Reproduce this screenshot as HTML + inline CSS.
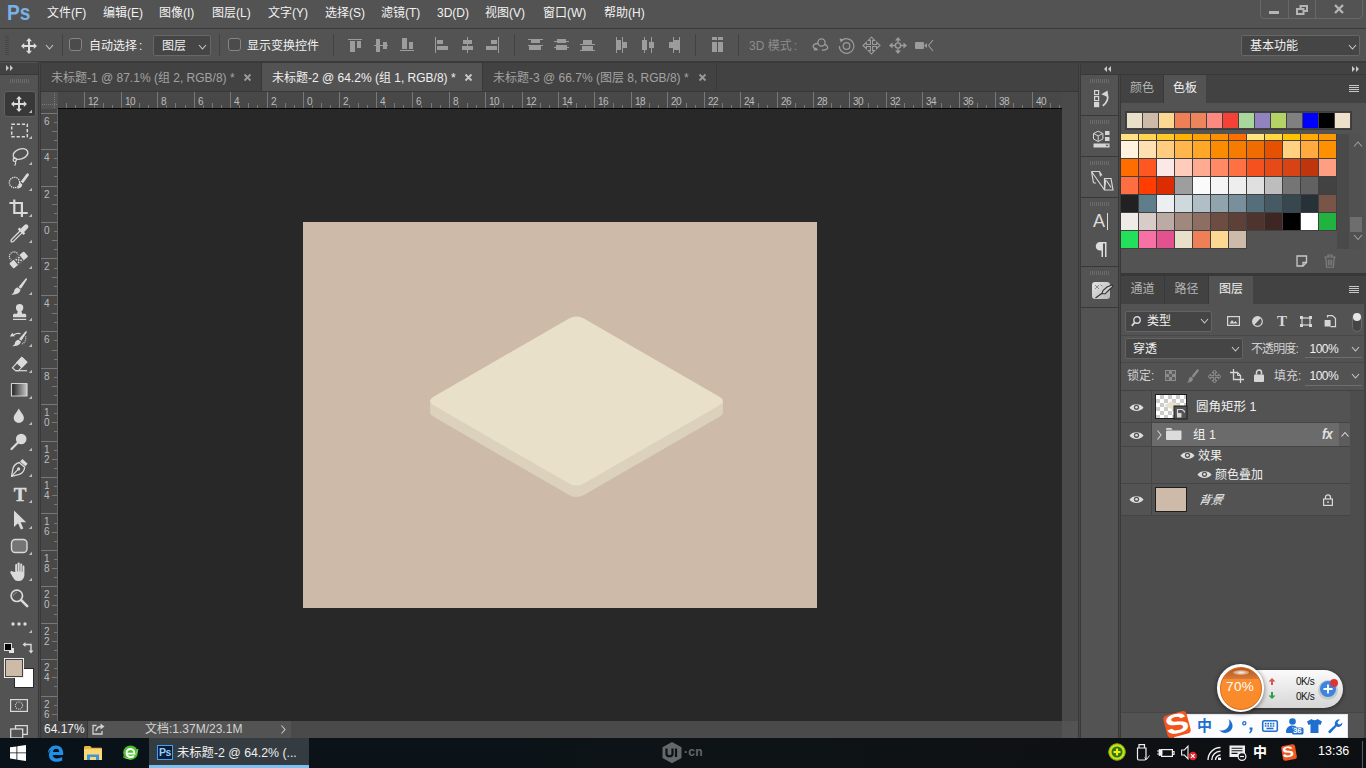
<!DOCTYPE html>
<html lang="zh-CN">
<head>
<meta charset="utf-8">
<title>Photoshop</title>
<style>
*{box-sizing:border-box;margin:0;padding:0}
html,body{width:1366px;height:768px;overflow:hidden;background:#535353}
body{position:relative;font-family:"Liberation Sans","Noto Sans CJK SC",sans-serif;font-size:12px;color:#dcdcdc}
.a{position:absolute}
svg{position:absolute;overflow:visible}
.t{position:absolute;white-space:nowrap;line-height:16px;font-size:12px}
#menubar{left:0;top:0;width:1366px;height:28px;background:#535353}
#menubar .ps{position:absolute;left:7px;top:-0.5px;font-size:21.5px;font-weight:bold;color:#7ab1e6;letter-spacing:0;line-height:26px;transform-origin:0 0;transform:scaleX(0.89)}
#menubar .mi{position:absolute;top:5px;line-height:16px;font-size:12px;color:#f2f2f2;white-space:nowrap}
#optbar{left:0;top:28px;width:1366px;height:35px;background:#535353;border-top:1px solid #3a3a3a;border-bottom:2px solid #3a3a3a}
.sep{position:absolute;width:1px;background:#424242;top:34px;height:22px}
.cb{position:absolute;width:13px;height:13px;border:1px solid #858585;border-radius:3px;background:#4b4b4b;top:38px}
.dd{position:absolute;background:#454545;border:1px solid #666;border-radius:2px}
#tools{left:0;top:62px;width:39px;height:676px;background:#535353;border-right:1px solid #3d3d3d}
#toolhdr{left:0;top:63px;width:39px;height:12px;background:#424242;border-right:1px solid #383838;border-bottom:1px solid #383838}
#tgap{left:38px;top:63px;width:3px;height:675px;background:linear-gradient(90deg,#393939 0,#393939 33.3%,#474747 33.3%,#474747 66.6%,#393939 66.6%)}
#tabbar{left:41px;top:63px;width:1037px;height:29px;background:#424242;border-bottom:1px solid #383838}
.dtab{position:absolute;top:0;height:28px;border-right:1px solid #383838;color:#a2a2a2;font-size:12px;line-height:30px;white-space:nowrap}
.dtab.on{background:#535353;color:#f0f0f0}
.dtab span{position:absolute;top:0}
#canvas{left:41px;top:92px;width:1021px;height:629px;background:#282828}
#hruler{left:41px;top:92px;width:1021px;height:17px;background:#484848;overflow:hidden;border-bottom:1px solid #060606}
#vruler{left:41px;top:109px;width:17px;height:612px;background:#484848;overflow:hidden;border-right:1px solid #666}
#rcorner{left:41px;top:92px;width:17px;height:17px;background:#535353}
.rl{position:absolute;font-size:10px;line-height:10px;color:#bcbcbc;letter-spacing:-0.6px}
#vscroll{left:1062px;top:92px;width:16px;height:629px;background:#4a4a4a}
#statusbar{left:41px;top:721px;width:1021px;height:17px;background:#4a4a4a}
#doc{left:303px;top:222px;width:514px;height:386px;background:#cdbaa9}
#rsplit{left:1078px;top:63px;width:3px;height:675px;background:linear-gradient(90deg,#393939 0,#393939 33.3%,#474747 33.3%,#474747 66.6%,#393939 66.6%)}
#rhdr{left:1081px;top:63px;width:285px;height:12px;background:#424242;border-bottom:1px solid #383838}
#istrip{left:1081px;top:75px;width:37px;height:663px;background:#535353}
#isgap{left:1118px;top:75px;width:3px;height:663px;background:linear-gradient(90deg,#393939 0,#393939 33.3%,#474747 33.3%,#474747 66.6%,#393939 66.6%)}
.ig{position:absolute;left:0;width:37px;background:#535353;border-bottom:1.5px solid #383838}
.grip{position:absolute;height:4px;background:repeating-linear-gradient(90deg,#6a6a6a 0,#6a6a6a 1px,transparent 1px,transparent 2px)}
#rpanels{left:1121px;top:75px;width:245px;height:663px;background:#535353}
.ptabs{position:absolute;left:0;width:245px;height:28px;background:#424242;border-bottom:1px solid #424242}
.ptab{position:absolute;top:0;height:28px;line-height:27px;text-align:center;color:#b4b4b4;font-size:12px;border-right:1px solid #383838}
.ptab.on{background:#535353;color:#f0f0f0;border-right:none}
.sw{position:absolute;width:17px;height:17px}
.rsw{position:absolute;width:15px;height:15px;top:1px}
#taskbar{left:0;top:738px;width:1366px;height:30px;background:linear-gradient(90deg,#0a1219 0,#0b1319 30%,#0e1315 55%,#0d1012 100%)}
</style>
</head>
<body>
<div id="menubar" class="a"><div class="ps">Ps</div>
<div class="mi" style="left:47px">文件(F)</div>
<div class="mi" style="left:103px">编辑(E)</div>
<div class="mi" style="left:159px">图像(I)</div>
<div class="mi" style="left:212px">图层(L)</div>
<div class="mi" style="left:268px">文字(Y)</div>
<div class="mi" style="left:325px">选择(S)</div>
<div class="mi" style="left:381px">滤镜(T)</div>
<div class="mi" style="left:437px">3D(D)</div>
<div class="mi" style="left:485px">视图(V)</div>
<div class="mi" style="left:543px">窗口(W)</div>
<div class="mi" style="left:604px">帮助(H)</div>
<div class="a" style="left:1260px;top:-2px;width:103px;height:21px;border:1px solid #686868;border-radius:0 0 4px 4px"></div>
<div class="a" style="left:1288px;top:0;width:1px;height:18px;background:#686868"></div><div class="a" style="left:1315px;top:0;width:1px;height:18px;background:#686868"></div>
<div class="a" style="left:1269px;top:11px;width:10px;height:3px;background:#b4b4b4"></div>
<svg style="left:1296px;top:5px" width="12" height="10"><path d="M4.5 3V1h6.5v5h-2.5M1 4h6.5v5H1z" fill="none" stroke="#b4b4b4" stroke-width="2"/></svg>
<svg style="left:1334px;top:5px" width="10" height="8"><path d="M1 0l8 8M9 0L1 8" fill="none" stroke="#b4b4b4" stroke-width="2.4"/></svg>
</div>
<div id="optbar" class="a"></div>
<div class="a" style="left:5px;top:36px;width:4px;height:19px;background:repeating-linear-gradient(0deg,#474747 0,#474747 1px,transparent 1px,transparent 2px)"></div>
<svg style="left:21px;top:38px" width="16" height="16" viewBox="0 0 16 16"><path d="M8 0l3 3.2H9v3.8h3.8V5L16 8l-3.2 3V9H9v3.8h2L8 16l-3-3.2h2V9H3.2v2L0 8l3.2-3v2H7V3.2H5z" fill="#dcdcdc"/></svg>
<svg style="left:46px;top:45px" width="7" height="4"><path d="M0 0l3.5 4L7 0" fill="none" stroke="#c8c8c8" stroke-width="1.1"/></svg>
<div class="sep" style="left:62px"></div>
<div class="sep" style="left:219px"></div>
<div class="sep" style="left:333px"></div>
<div class="sep" style="left:514px"></div>
<div class="sep" style="left:695px"></div>
<div class="sep" style="left:738px"></div>
<div class="cb" style="left:69px"></div>
<div class="t" style="left:89px;top:38px;color:#f0f0f0">自动选择<span style="margin-left:2px">:</span></div>
<div class="dd" style="left:153px;top:35px;width:58px;height:21px"></div>
<div class="t" style="left:162px;top:38px;color:#f0f0f0">图层</div>
<svg style="left:199px;top:45px" width="7" height="4"><path d="M0 0l3.5 4L7 0" fill="none" stroke="#c8c8c8" stroke-width="1.1"/></svg>
<div class="cb" style="left:228px"></div>
<div class="t" style="left:247px;top:38px;color:#f0f0f0">显示变换控件</div>
<svg style="left:0;top:0" width="1366" height="62" fill="#9c9c9c">
<rect x="348" y="39" width="14" height="1"/><rect x="350" y="41" width="5" height="11"/><rect x="357" y="41" width="4" height="7"/>
<rect x="374" y="45" width="14" height="1"/><rect x="376" y="39" width="4" height="13"/><rect x="383" y="42" width="4" height="7"/>
<rect x="400" y="50" width="14" height="1"/><rect x="402" y="38" width="5" height="11"/><rect x="409" y="42" width="4" height="7"/>
<rect x="435" y="37" width="1" height="16"/><rect x="437" y="40" width="6" height="4"/><rect x="437" y="46" width="11" height="4"/>
<rect x="467" y="37" width="1" height="16"/><rect x="463" y="40" width="9" height="4"/><rect x="462" y="46" width="11" height="4"/>
<rect x="498" y="37" width="1" height="16"/><rect x="491" y="40" width="6" height="4"/><rect x="486" y="46" width="11" height="4"/>
<rect x="528" y="39" width="15" height="1"/><rect x="531" y="40" width="9" height="3"/><rect x="528" y="45" width="15" height="1"/><rect x="529" y="46" width="12" height="4"/>
<rect x="554" y="41" width="15" height="1"/><rect x="557" y="39" width="9" height="4"/><rect x="554" y="47" width="15" height="1"/><rect x="556" y="45" width="11" height="5"/>
<rect x="580" y="44" width="15" height="1"/><rect x="583" y="40" width="9" height="4"/><rect x="580" y="50" width="15" height="1"/><rect x="582" y="46" width="11" height="4"/>
<rect x="616" y="37" width="1" height="16"/><rect x="617" y="40" width="4" height="10"/><rect x="622" y="37" width="1" height="16"/><rect x="623" y="42" width="4" height="6"/>
<rect x="644" y="37" width="1" height="16"/><rect x="642" y="40" width="5" height="10"/><rect x="651" y="37" width="1" height="16"/><rect x="649" y="42" width="5" height="6"/>
<rect x="679" y="37" width="1" height="16"/><rect x="674" y="40" width="5" height="10"/><rect x="673" y="37" width="1" height="16"/><rect x="669" y="42" width="4" height="6"/>
<rect x="712" y="37" width="5" height="3"/><rect x="718" y="37" width="5" height="3"/><rect x="712" y="42" width="5" height="10"/><rect x="718" y="42" width="5" height="10"/>
</svg>
<div class="t" style="left:749px;top:38px;color:#8c8c8c">3D 模式<span style="margin-left:2px">:</span></div>
<svg style="left:811px;top:37px" width="18" height="18" viewBox="0 0 18 18" fill="none" stroke="#9c9c9c" stroke-width="1.3"><circle cx="10.5" cy="5.5" r="3.6"/><path d="M7 6.5C3.5 6.5 1 8.5 2.5 10.5l2.5 2.2M11 13c4 .5 6.500-1.500 5.500-3.500-.7-1.200-2-1.800-3.200-2"/><path d="M2.500 13.500l5-.3-2.800-3z" fill="#9c9c9c" stroke="none"/></svg>
<svg style="left:838px;top:37px" width="17" height="17" viewBox="0 0 17 17" fill="none" stroke="#9c9c9c" stroke-width="1.2"><circle cx="8.500" cy="9" r="3.300"/><path d="M3.500 3.800A7.300 7.300 0 1 1 1.300 9"/><path d="M1.500 1.200l4.200 1.300-3 3z" fill="#9c9c9c" stroke="none"/></svg>
<svg style="left:863px;top:37px" width="17" height="17" viewBox="0 0 16 16"><path d="M8 0l3 3.2H9v3.8h3.8V5L16 8l-3.2 3V9H9v3.8h2L8 16l-3-3.2h2V9H3.2v2L0 8l3.2-3v2H7V3.2H5z" fill="none" stroke="#9c9c9c" stroke-width="1"/></svg>
<svg style="left:889px;top:37px" width="18" height="17" viewBox="0 0 18 17" fill="#9c9c9c"><path d="M9 0l3 3.500H6zM9 17l3-3.500H6zM0 8.500l3.500-3v6zM18 8.500l-3.500-3v6z"/><circle cx="9" cy="8.500" r="2.600" fill="none" stroke="#9c9c9c" stroke-width="1.400"/><path d="M9 3v2.500M9 11.500V14M3 8.500h3M12 8.500h3" stroke="#9c9c9c" stroke-width="1.400"/></svg>
<svg style="left:915px;top:39px" width="19" height="13" viewBox="0 0 19 13"><rect x="0" y="3" width="9" height="7" rx="1" fill="#9c9c9c"/><path d="M9 6.500l3-2.500v5z" fill="#9c9c9c"/><path d="M18 1l-4.500 5.500L18 12" fill="none" stroke="#9c9c9c" stroke-width="1.100"/></svg>
<div class="dd" style="left:1241px;top:35px;width:119px;height:21px"></div>
<div class="t" style="left:1250px;top:38px;color:#f0f0f0">基本功能</div>
<svg style="left:1349px;top:45px" width="7" height="4"><path d="M0 0l3.5 4L7 0" fill="none" stroke="#c8c8c8" stroke-width="1.1"/></svg>
<div id="tools" class="a"></div><div id="toolhdr" class="a"></div><div id="tgap" class="a"></div>
<svg style="left:6px;top:65px" width="8" height="6" fill="#c8c8c8"><path d="M0 0l3 3-3 3zM4 0l3 3-3 3z"/></svg>
<div class="grip" style="left:10px;top:79px;width:20px"></div>
<div class="a" style="left:4px;top:91px;width:32px;height:26px;background:#383838;border:1px solid #606060;border-radius:3px"></div>
<svg style="left:6px;top:91px" width="26" height="26" viewBox="0 0 26 26" fill="none" stroke="#dadada" stroke-width="1.4" stroke-linecap="round" stroke-linejoin="round"><path transform="translate(5,5)" d="M8 0l3 3.2H9v3.8h3.8V5L16 8l-3.2 3V9H9v3.8h2L8 16l-3-3.2h2V9H3.2v2L0 8l3.2-3v2H7V3.2H5z" fill="#dadada" stroke="none"/><path d="M26 18.800v3.200h-3.200z" fill="#bdbdbd" stroke="none"/></svg>
<svg style="left:6px;top:117px" width="26" height="26" viewBox="0 0 26 26" fill="none" stroke="#dadada" stroke-width="1.4" stroke-linecap="round" stroke-linejoin="round"><rect x="5.700" y="7.200" width="15.600" height="12.600" stroke-dasharray="3.200 1.900" stroke-linecap="butt" stroke-width="1.500"/><path d="M26 18.800v3.200h-3.200z" fill="#bdbdbd" stroke="none"/></svg>
<svg style="left:6px;top:143px" width="26" height="26" viewBox="0 0 26 26" fill="none" stroke="#dadada" stroke-width="1.4" stroke-linecap="round" stroke-linejoin="round"><ellipse cx="14.500" cy="11" rx="7.600" ry="5" transform="rotate(-20 14.500 11)"/><circle cx="8.800" cy="16.800" r="1.700" stroke-width="1.200"/><path d="M9.200 18.500c.8 1 .6 2.500-.2 3.700" stroke-width="1.200"/><path d="M26 18.800v3.200h-3.200z" fill="#bdbdbd" stroke="none"/></svg>
<svg style="left:6px;top:169px" width="26" height="26" viewBox="0 0 26 26" fill="none" stroke="#dadada" stroke-width="1.4" stroke-linecap="round" stroke-linejoin="round"><circle cx="8.500" cy="13.500" r="5.200" stroke-dasharray="0.100 2.100" stroke-width="1.500"/><path d="M22.300 4.500c.8.600.7 1.500.2 2.200l-5.500 7.600-2.200-1.700 5.600-7.500c.5-.7 1.300-1 1.900-.6z" fill="#dadada" stroke="none"/><path d="M14 13.600l2.300 1.800c-.2 2.500-2.300 4.300-5.800 4.100 1.700-1 1.700-2.200 2-3.800.2-.9.800-1.700 1.500-2.100z" fill="#dadada" stroke="none"/><path d="M26 18.800v3.200h-3.200z" fill="#bdbdbd" stroke="none"/></svg>
<svg style="left:6px;top:195px" width="26" height="26" viewBox="0 0 26 26" fill="none" stroke="#dadada" stroke-width="1.4" stroke-linecap="round" stroke-linejoin="round"><path d="M8.300 4.500V18h13.400M3.400 8h12.500v14" stroke-width="2.200" stroke-linecap="butt" stroke-linejoin="miter"/><path d="M26 18.800v3.200h-3.200z" fill="#bdbdbd" stroke="none"/></svg>
<svg style="left:6px;top:221px" width="26" height="26" viewBox="0 0 26 26" fill="none" stroke="#dadada" stroke-width="1.4" stroke-linecap="round" stroke-linejoin="round"><path d="M14 10l-8.200 8.200c-.7.700-.9 1.800-.600 2.500.800.300 1.800.100 2.500-.600L15.900 11.900" stroke-width="1.300"/><path d="M12.600 7.400l5.800 5.800" stroke-width="2.500" stroke-linecap="butt"/><path d="M16.800 9l3.300-3.300" stroke-width="4.600"/><path d="M26 18.800v3.200h-3.200z" fill="#bdbdbd" stroke="none"/></svg>
<svg style="left:6px;top:247px" width="26" height="26" viewBox="0 0 26 26" fill="none" stroke="#dadada" stroke-width="1.4" stroke-linecap="round" stroke-linejoin="round"><circle cx="8" cy="9.500" r="4.600" stroke-dasharray="0.100 1.900" stroke-width="1.300"/><g transform="rotate(-40 12.700 13)"><rect x="2.500" y="9" width="20.400" height="8" rx="1.800" fill="#dadada" stroke="#535353" stroke-width="1.200"/><rect x="9" y="9.600" width="7.400" height="6.800" fill="#535353" stroke="none"/><g fill="#dadada" stroke="none"><circle cx="11" cy="11.300" r="0.900"/><circle cx="14.400" cy="11.300" r="0.900"/><circle cx="11" cy="14.700" r="0.900"/><circle cx="14.400" cy="14.700" r="0.900"/><circle cx="12.700" cy="13" r="0.900"/></g></g><path d="M26 18.800v3.200h-3.200z" fill="#bdbdbd" stroke="none"/></svg>
<svg style="left:6px;top:273px" width="26" height="26" viewBox="0 0 26 26" fill="none" stroke="#dadada" stroke-width="1.4" stroke-linecap="round" stroke-linejoin="round"><path d="M20.700 5.400c.500.300.400.900.100 1.400L15 15.800l-2.500-1.900 7-8.200c.400-.400.800-.600 1.200-.300z" fill="#dadada" stroke="none"/><path d="M11.800 14.500l2.700 2.100c-.2 3.200-3.800 5.400-9.300 5 2.300-1.200 2.700-2.400 3.100-4.200.400-1.500 1.900-2.700 3.500-2.900z" fill="#dadada" stroke="none"/><path d="M26 18.800v3.200h-3.200z" fill="#bdbdbd" stroke="none"/></svg>
<svg style="left:6px;top:299px" width="26" height="26" viewBox="0 0 26 26" fill="none" stroke="#dadada" stroke-width="1.4" stroke-linecap="round" stroke-linejoin="round"><circle cx="13.600" cy="8.700" r="3.700" fill="#dadada" stroke="none"/><path d="M12 11.500h3.200l1 3.500h-5.200z" fill="#dadada" stroke="none"/><path d="M7 18.300v-2c0-.8.600-1.500 1.500-1.500h10.200c.8 0 1.500.700 1.500 1.500v2z" fill="#dadada" stroke="none"/><path d="M7 20.400h13.200" stroke-width="1.200" stroke-linecap="butt"/><path d="M26 18.800v3.200h-3.200z" fill="#bdbdbd" stroke="none"/></svg>
<svg style="left:6px;top:325px" width="26" height="26" viewBox="0 0 26 26" fill="none" stroke="#dadada" stroke-width="1.4" stroke-linecap="round" stroke-linejoin="round"><g transform="translate(1.500,1.300) scale(0.920)"><path d="M20.700 5.400c.500.300.400.900.100 1.400L15 15.800l-2.500-1.900 7-8.200c.400-.400.800-.600 1.200-.300z" fill="#dadada" stroke="none"/><path d="M11.800 14.500l2.700 2.100c-.2 3.200-3.800 5.400-9.300 5 2.300-1.200 2.700-2.400 3.100-4.200.400-1.500 1.900-2.700 3.500-2.900z" fill="#dadada" stroke="none"/></g><path d="M8 9.800c1.600-1.300 3.800-1.700 6-1.100" stroke-width="1.200"/><path d="M3.800 11.500l5-.2-2.400-3.500z" fill="#dadada" stroke="none"/><path d="M19.800 11.800a7 7 0 0 1-3.300 7" stroke-dasharray="0.100 1.900" stroke-width="1.200"/><path d="M26 18.800v3.200h-3.200z" fill="#bdbdbd" stroke="none"/></svg>
<svg style="left:6px;top:351px" width="26" height="26" viewBox="0 0 26 26" fill="none" stroke="#dadada" stroke-width="1.4" stroke-linecap="round" stroke-linejoin="round"><path d="M15.800 6.500l5 4.600-8.300 8.500h-3l-3.100-2.800z" stroke-width="1.200"/><path d="M15.800 6.500l5 4.600-5 5.100-5-4.600z" fill="#dadada" stroke="#dadada" stroke-width="1.200"/><path d="M9.500 19.700H21" stroke-width="1.200" stroke-linecap="butt"/><path d="M26 18.800v3.200h-3.200z" fill="#bdbdbd" stroke="none"/></svg>
<svg style="left:6px;top:377px" width="26" height="26" viewBox="0 0 26 26" fill="none" stroke="#dadada" stroke-width="1.4" stroke-linecap="round" stroke-linejoin="round"><defs><linearGradient id="gr" x1="0" y1="0" x2="1" y2="0"><stop offset="0" stop-color="#1e1e1e"/><stop offset="1" stop-color="#c8c8c8"/></linearGradient></defs><rect x="5.500" y="6.500" width="15.500" height="12.500" fill="url(#gr)" stroke="#d2d2d2" stroke-width="1.200"/><path d="M26 18.800v3.200h-3.200z" fill="#bdbdbd" stroke="none"/></svg>
<svg style="left:6px;top:403px" width="26" height="26" viewBox="0 0 26 26" fill="none" stroke="#dadada" stroke-width="1.4" stroke-linecap="round" stroke-linejoin="round"><path d="M12.800 5.600C11.500 8.500 7.700 12 7.700 15a5.100 5.100 0 0 0 10.200 0C17.900 12 14.100 8.500 12.800 5.600z" fill="#dadada" stroke="none"/><path d="M26 18.800v3.200h-3.200z" fill="#bdbdbd" stroke="none"/></svg>
<svg style="left:6px;top:429px" width="26" height="26" viewBox="0 0 26 26" fill="none" stroke="#dadada" stroke-width="1.4" stroke-linecap="round" stroke-linejoin="round"><circle cx="15.200" cy="10" r="5.300" fill="#dadada" stroke="none"/><path d="M11.500 14l-6 6" stroke-width="2.200"/><path d="M26 18.800v3.200h-3.200z" fill="#bdbdbd" stroke="none"/></svg>
<svg style="left:6px;top:455px" width="26" height="26" viewBox="0 0 26 26" fill="none" stroke="#dadada" stroke-width="1.4" stroke-linecap="round" stroke-linejoin="round"><path d="M16.500 4l5.200 4.800-2.300 2.500-5.400-4.700z" fill="#dadada" stroke="none"/><path d="M13.200 7.500l5.500 4.800c-.5 3.500-2.500 6-5.500 7l-7.700 2 1.500-8c1-3 3.200-5 6.200-5.800z" stroke-width="1.300"/><path d="M5.800 21l6-6.300" stroke-width="1.100"/><circle cx="12.600" cy="13.900" r="1.600" fill="#dadada" stroke="none"/><path d="M26 18.800v3.200h-3.200z" fill="#bdbdbd" stroke="none"/></svg>
<svg style="left:6px;top:481px" width="26" height="26" viewBox="0 0 26 26" fill="none" stroke="#dadada" stroke-width="1.4" stroke-linecap="round" stroke-linejoin="round"><text x="14" y="19.500" text-anchor="middle" font-family="Liberation Serif,serif" font-weight="bold" font-size="19" fill="#dadada" stroke="#dadada" stroke-width="0.500">T</text><path d="M26 18.800v3.200h-3.200z" fill="#bdbdbd" stroke="none"/></svg>
<svg style="left:6px;top:507px" width="26" height="26" viewBox="0 0 26 26" fill="none" stroke="#dadada" stroke-width="1.4" stroke-linecap="round" stroke-linejoin="round"><path d="M8 3.500v16.500l4-3.800 2.800 6.300 2.600-1.100-2.800-6.200h5.600z" fill="#dadada" stroke="none"/><path d="M26 18.800v3.200h-3.200z" fill="#bdbdbd" stroke="none"/></svg>
<svg style="left:6px;top:533px" width="26" height="26" viewBox="0 0 26 26" fill="none" stroke="#dadada" stroke-width="1.4" stroke-linecap="round" stroke-linejoin="round"><rect x="5.500" y="6.500" width="15.500" height="13" rx="3.800" fill="#757575" stroke-width="1.400"/><path d="M26 18.800v3.200h-3.200z" fill="#bdbdbd" stroke="none"/></svg>
<svg style="left:6px;top:559px" width="26" height="26" viewBox="0 0 26 26" fill="none" stroke="#dadada" stroke-width="1.4" stroke-linecap="round" stroke-linejoin="round"><path d="M9.200 13V6.200c0-1.700 2.300-1.700 2.300 0V4.700c0-1.700 2.400-1.700 2.400 0v1c0-1.600 2.300-1.600 2.300 0v1.800c0-1.500 2.200-1.500 2.200 0v8c0 3.500-2 6.500-5 6.500h-1.500c-2.300 0-3.500-1.300-4.700-3.300L4.500 14c-.9-1.500 1-2.700 2.100-1.400z" fill="#dadada" stroke="none"/><path d="M11.500 6v6M13.900 5v7M16.200 7v5.500" stroke="#535353" stroke-width="0.600"/><path d="M26 18.800v3.200h-3.200z" fill="#bdbdbd" stroke="none"/></svg>
<svg style="left:6px;top:585px" width="26" height="26" viewBox="0 0 26 26" fill="none" stroke="#dadada" stroke-width="1.4" stroke-linecap="round" stroke-linejoin="round"><circle cx="10.800" cy="10.800" r="5.700" stroke-width="1.700"/><path d="M15.200 15.200l6 6" stroke-width="2.600"/><path d="M7.500 10.500a3.400 3.400 0 0 1 3-3" stroke-width="0.900" stroke="#9a9a9a"/></svg>
<svg style="left:6px;top:611px" width="26" height="26" viewBox="0 0 26 26" fill="none" stroke="#dadada" stroke-width="1.4" stroke-linecap="round" stroke-linejoin="round"><circle cx="7" cy="13" r="1.700" fill="#dadada" stroke="none"/><circle cx="13" cy="13" r="1.700" fill="#dadada" stroke="none"/><circle cx="19" cy="13" r="1.700" fill="#dadada" stroke="none"/><path d="M26 18.800v3.200h-3.200z" fill="#bdbdbd" stroke="none"/></svg>
<div class="a" style="left:8px;top:647px;width:7px;height:7px;background:#e6e6e6;border:1px solid #535353"></div><div class="a" style="left:4px;top:643px;width:8px;height:8px;background:#000;border:1px solid #d8d8d8"></div>
<svg style="left:22px;top:642px" width="12" height="12" fill="none" stroke="#dadada" stroke-width="1.400"><path d="M3 2.500h6v6.500"/><path d="M3.500 0L0.500 2.500l3 2.500z" fill="#dadada" stroke="none"/><path d="M6.500 8.500L9 11.500l2.500-3z" fill="#dadada" stroke="none"/></svg>
<div class="a" style="left:14px;top:668px;width:20px;height:20px;background:#fff;border:1px solid #2a2a2a;box-shadow:inset 0 0 0 1px #fff"></div>
<div class="a" style="left:4px;top:658px;width:20px;height:20px;background:#cdbaa9;border:1px solid #ececec;box-shadow:inset 0 0 0 1px #444"></div>
<svg style="left:10px;top:699px" width="18" height="13" fill="none" stroke="#dadada"><rect x="0.600" y="0.600" width="16.800" height="11.800" stroke-width="1.200"/><circle cx="9" cy="6.500" r="3.600" stroke-dasharray="0.900 1" stroke-width="1.100"/></svg>
<svg style="left:10px;top:725px" width="18" height="13" fill="none" stroke="#dadada" stroke-width="1.300"><path d="M5.500 4V0.700h11.800v8.600H13"/><rect x="0.700" y="4" width="12" height="9" fill="#535353"/></svg>
<div id="tabbar" class="a">
<div class="dtab" style="left:0;width:221px"><span style="left:10px">未标题-1 @ 87.1% (组 2, RGB/8) *</span></div>
<div class="dtab on" style="left:221px;width:221px"><span style="left:231px;left:10px">未标题-2 @ 64.2% (组 1, RGB/8) *</span></div>
<div class="dtab" style="left:442px;width:234px"><span style="left:10px">未标题-3 @ 66.7% (图层 8, RGB/8) *</span></div>
<svg style="left:203px;top:11px" width="7" height="7"><path d="M0.500 0.500l6 6M6.500 0.500l-6 6" stroke="#9a9a9a" stroke-width="1.800" fill="none"/></svg>
<svg style="left:424px;top:11px" width="7" height="7"><path d="M0.500 0.500l6 6M6.500 0.500l-6 6" stroke="#c8c8c8" stroke-width="1.800" fill="none"/></svg>
<svg style="left:658px;top:11px" width="7" height="7"><path d="M0.500 0.500l6 6M6.500 0.500l-6 6" stroke="#9a9a9a" stroke-width="1.800" fill="none"/></svg>
</div>
<div id="canvas" class="a"></div>
<div id="hruler" class="a">
<div class="a" style="left:16.0px;top:13px;width:1px;height:3px;background:#787878"></div>
<div class="a" style="left:25.0px;top:11px;width:1px;height:5px;background:#787878"></div>
<div class="a" style="left:34.0px;top:13px;width:1px;height:3px;background:#787878"></div>
<div class="a" style="left:43.0px;top:0;width:1px;height:16px;background:#787878"></div>
<div class="rl" style="left:47.0px;top:4.5px">12</div>
<div class="a" style="left:53.0px;top:13px;width:1px;height:3px;background:#787878"></div>
<div class="a" style="left:62.0px;top:11px;width:1px;height:5px;background:#787878"></div>
<div class="a" style="left:71.0px;top:13px;width:1px;height:3px;background:#787878"></div>
<div class="a" style="left:80.0px;top:0;width:1px;height:16px;background:#787878"></div>
<div class="rl" style="left:84.0px;top:4.5px">10</div>
<div class="a" style="left:89.0px;top:13px;width:1px;height:3px;background:#787878"></div>
<div class="a" style="left:98.0px;top:11px;width:1px;height:5px;background:#787878"></div>
<div class="a" style="left:107.0px;top:13px;width:1px;height:3px;background:#787878"></div>
<div class="a" style="left:116.0px;top:0;width:1px;height:16px;background:#787878"></div>
<div class="rl" style="left:120.0px;top:4.5px">8</div>
<div class="a" style="left:125.0px;top:13px;width:1px;height:3px;background:#787878"></div>
<div class="a" style="left:134.0px;top:11px;width:1px;height:5px;background:#787878"></div>
<div class="a" style="left:144.0px;top:13px;width:1px;height:3px;background:#787878"></div>
<div class="a" style="left:153.0px;top:0;width:1px;height:16px;background:#787878"></div>
<div class="rl" style="left:157.0px;top:4.5px">6</div>
<div class="a" style="left:162.0px;top:13px;width:1px;height:3px;background:#787878"></div>
<div class="a" style="left:171.0px;top:11px;width:1px;height:5px;background:#787878"></div>
<div class="a" style="left:180.0px;top:13px;width:1px;height:3px;background:#787878"></div>
<div class="a" style="left:189.0px;top:0;width:1px;height:16px;background:#787878"></div>
<div class="rl" style="left:193.0px;top:4.5px">4</div>
<div class="a" style="left:198.0px;top:13px;width:1px;height:3px;background:#787878"></div>
<div class="a" style="left:207.0px;top:11px;width:1px;height:5px;background:#787878"></div>
<div class="a" style="left:216.0px;top:13px;width:1px;height:3px;background:#787878"></div>
<div class="a" style="left:226.0px;top:0;width:1px;height:16px;background:#787878"></div>
<div class="rl" style="left:230.0px;top:4.5px">2</div>
<div class="a" style="left:235.0px;top:13px;width:1px;height:3px;background:#787878"></div>
<div class="a" style="left:244.0px;top:11px;width:1px;height:5px;background:#787878"></div>
<div class="a" style="left:253.0px;top:13px;width:1px;height:3px;background:#787878"></div>
<div class="a" style="left:262.0px;top:0;width:1px;height:16px;background:#787878"></div>
<div class="rl" style="left:266.0px;top:4.5px">0</div>
<div class="a" style="left:271.0px;top:13px;width:1px;height:3px;background:#787878"></div>
<div class="a" style="left:280.0px;top:11px;width:1px;height:5px;background:#787878"></div>
<div class="a" style="left:289.0px;top:13px;width:1px;height:3px;background:#787878"></div>
<div class="a" style="left:298.0px;top:0;width:1px;height:16px;background:#787878"></div>
<div class="rl" style="left:302.0px;top:4.5px">2</div>
<div class="a" style="left:308.0px;top:13px;width:1px;height:3px;background:#787878"></div>
<div class="a" style="left:317.0px;top:11px;width:1px;height:5px;background:#787878"></div>
<div class="a" style="left:326.0px;top:13px;width:1px;height:3px;background:#787878"></div>
<div class="a" style="left:335.0px;top:0;width:1px;height:16px;background:#787878"></div>
<div class="rl" style="left:339.0px;top:4.5px">4</div>
<div class="a" style="left:344.0px;top:13px;width:1px;height:3px;background:#787878"></div>
<div class="a" style="left:353.0px;top:11px;width:1px;height:5px;background:#787878"></div>
<div class="a" style="left:362.0px;top:13px;width:1px;height:3px;background:#787878"></div>
<div class="a" style="left:371.0px;top:0;width:1px;height:16px;background:#787878"></div>
<div class="rl" style="left:375.0px;top:4.5px">6</div>
<div class="a" style="left:380.0px;top:13px;width:1px;height:3px;background:#787878"></div>
<div class="a" style="left:390.0px;top:11px;width:1px;height:5px;background:#787878"></div>
<div class="a" style="left:399.0px;top:13px;width:1px;height:3px;background:#787878"></div>
<div class="a" style="left:408.0px;top:0;width:1px;height:16px;background:#787878"></div>
<div class="rl" style="left:412.0px;top:4.5px">8</div>
<div class="a" style="left:417.0px;top:13px;width:1px;height:3px;background:#787878"></div>
<div class="a" style="left:426.0px;top:11px;width:1px;height:5px;background:#787878"></div>
<div class="a" style="left:435.0px;top:13px;width:1px;height:3px;background:#787878"></div>
<div class="a" style="left:444.0px;top:0;width:1px;height:16px;background:#787878"></div>
<div class="rl" style="left:448.0px;top:4.5px">10</div>
<div class="a" style="left:453.0px;top:13px;width:1px;height:3px;background:#787878"></div>
<div class="a" style="left:462.0px;top:11px;width:1px;height:5px;background:#787878"></div>
<div class="a" style="left:471.0px;top:13px;width:1px;height:3px;background:#787878"></div>
<div class="a" style="left:481.0px;top:0;width:1px;height:16px;background:#787878"></div>
<div class="rl" style="left:485.0px;top:4.5px">12</div>
<div class="a" style="left:490.0px;top:13px;width:1px;height:3px;background:#787878"></div>
<div class="a" style="left:499.0px;top:11px;width:1px;height:5px;background:#787878"></div>
<div class="a" style="left:508.0px;top:13px;width:1px;height:3px;background:#787878"></div>
<div class="a" style="left:517.0px;top:0;width:1px;height:16px;background:#787878"></div>
<div class="rl" style="left:521.0px;top:4.5px">14</div>
<div class="a" style="left:526.0px;top:13px;width:1px;height:3px;background:#787878"></div>
<div class="a" style="left:535.0px;top:11px;width:1px;height:5px;background:#787878"></div>
<div class="a" style="left:544.0px;top:13px;width:1px;height:3px;background:#787878"></div>
<div class="a" style="left:553.0px;top:0;width:1px;height:16px;background:#787878"></div>
<div class="rl" style="left:557.0px;top:4.5px">16</div>
<div class="a" style="left:563.0px;top:13px;width:1px;height:3px;background:#787878"></div>
<div class="a" style="left:572.0px;top:11px;width:1px;height:5px;background:#787878"></div>
<div class="a" style="left:581.0px;top:13px;width:1px;height:3px;background:#787878"></div>
<div class="a" style="left:590.0px;top:0;width:1px;height:16px;background:#787878"></div>
<div class="rl" style="left:594.0px;top:4.5px">18</div>
<div class="a" style="left:599.0px;top:13px;width:1px;height:3px;background:#787878"></div>
<div class="a" style="left:608.0px;top:11px;width:1px;height:5px;background:#787878"></div>
<div class="a" style="left:617.0px;top:13px;width:1px;height:3px;background:#787878"></div>
<div class="a" style="left:626.0px;top:0;width:1px;height:16px;background:#787878"></div>
<div class="rl" style="left:630.0px;top:4.5px">20</div>
<div class="a" style="left:635.0px;top:13px;width:1px;height:3px;background:#787878"></div>
<div class="a" style="left:645.0px;top:11px;width:1px;height:5px;background:#787878"></div>
<div class="a" style="left:654.0px;top:13px;width:1px;height:3px;background:#787878"></div>
<div class="a" style="left:663.0px;top:0;width:1px;height:16px;background:#787878"></div>
<div class="rl" style="left:667.0px;top:4.5px">22</div>
<div class="a" style="left:672.0px;top:13px;width:1px;height:3px;background:#787878"></div>
<div class="a" style="left:681.0px;top:11px;width:1px;height:5px;background:#787878"></div>
<div class="a" style="left:690.0px;top:13px;width:1px;height:3px;background:#787878"></div>
<div class="a" style="left:699.0px;top:0;width:1px;height:16px;background:#787878"></div>
<div class="rl" style="left:703.0px;top:4.5px">24</div>
<div class="a" style="left:708.0px;top:13px;width:1px;height:3px;background:#787878"></div>
<div class="a" style="left:717.0px;top:11px;width:1px;height:5px;background:#787878"></div>
<div class="a" style="left:726.0px;top:13px;width:1px;height:3px;background:#787878"></div>
<div class="a" style="left:736.0px;top:0;width:1px;height:16px;background:#787878"></div>
<div class="rl" style="left:740.0px;top:4.5px">26</div>
<div class="a" style="left:745.0px;top:13px;width:1px;height:3px;background:#787878"></div>
<div class="a" style="left:754.0px;top:11px;width:1px;height:5px;background:#787878"></div>
<div class="a" style="left:763.0px;top:13px;width:1px;height:3px;background:#787878"></div>
<div class="a" style="left:772.0px;top:0;width:1px;height:16px;background:#787878"></div>
<div class="rl" style="left:776.0px;top:4.5px">28</div>
<div class="a" style="left:781.0px;top:13px;width:1px;height:3px;background:#787878"></div>
<div class="a" style="left:790.0px;top:11px;width:1px;height:5px;background:#787878"></div>
<div class="a" style="left:799.0px;top:13px;width:1px;height:3px;background:#787878"></div>
<div class="a" style="left:808.0px;top:0;width:1px;height:16px;background:#787878"></div>
<div class="rl" style="left:812.0px;top:4.5px">30</div>
<div class="a" style="left:818.0px;top:13px;width:1px;height:3px;background:#787878"></div>
<div class="a" style="left:827.0px;top:11px;width:1px;height:5px;background:#787878"></div>
<div class="a" style="left:836.0px;top:13px;width:1px;height:3px;background:#787878"></div>
<div class="a" style="left:845.0px;top:0;width:1px;height:16px;background:#787878"></div>
<div class="rl" style="left:849.0px;top:4.5px">32</div>
<div class="a" style="left:854.0px;top:13px;width:1px;height:3px;background:#787878"></div>
<div class="a" style="left:863.0px;top:11px;width:1px;height:5px;background:#787878"></div>
<div class="a" style="left:872.0px;top:13px;width:1px;height:3px;background:#787878"></div>
<div class="a" style="left:881.0px;top:0;width:1px;height:16px;background:#787878"></div>
<div class="rl" style="left:885.0px;top:4.5px">34</div>
<div class="a" style="left:890.0px;top:13px;width:1px;height:3px;background:#787878"></div>
<div class="a" style="left:900.0px;top:11px;width:1px;height:5px;background:#787878"></div>
<div class="a" style="left:909.0px;top:13px;width:1px;height:3px;background:#787878"></div>
<div class="a" style="left:918.0px;top:0;width:1px;height:16px;background:#787878"></div>
<div class="rl" style="left:922.0px;top:4.5px">36</div>
<div class="a" style="left:927.0px;top:13px;width:1px;height:3px;background:#787878"></div>
<div class="a" style="left:936.0px;top:11px;width:1px;height:5px;background:#787878"></div>
<div class="a" style="left:945.0px;top:13px;width:1px;height:3px;background:#787878"></div>
<div class="a" style="left:954.0px;top:0;width:1px;height:16px;background:#787878"></div>
<div class="rl" style="left:958.0px;top:4.5px">38</div>
<div class="a" style="left:963.0px;top:13px;width:1px;height:3px;background:#787878"></div>
<div class="a" style="left:972.0px;top:11px;width:1px;height:5px;background:#787878"></div>
<div class="a" style="left:981.0px;top:13px;width:1px;height:3px;background:#787878"></div>
<div class="a" style="left:991.0px;top:0;width:1px;height:16px;background:#787878"></div>
<div class="rl" style="left:995.0px;top:4.5px">40</div>
<div class="a" style="left:1000.0px;top:13px;width:1px;height:3px;background:#787878"></div>
<div class="a" style="left:1009.0px;top:11px;width:1px;height:5px;background:#787878"></div>
<div class="a" style="left:1018.0px;top:13px;width:1px;height:3px;background:#787878"></div>
</div>
<div id="vruler" class="a">
<div class="rl" style="left:3px;top:-29.3px">8</div>
<div class="a" style="left:0;top:4.0px;width:16px;height:1px;background:#787878"></div>
<div class="rl" style="left:3px;top:7.7px">6</div>
<div class="a" style="left:13px;top:13.0px;width:3px;height:1px;background:#787878"></div>
<div class="a" style="left:11px;top:22.0px;width:5px;height:1px;background:#787878"></div>
<div class="a" style="left:13px;top:31.0px;width:3px;height:1px;background:#787878"></div>
<div class="a" style="left:0;top:40.0px;width:16px;height:1px;background:#787878"></div>
<div class="rl" style="left:3px;top:43.7px">4</div>
<div class="a" style="left:13px;top:49.0px;width:3px;height:1px;background:#787878"></div>
<div class="a" style="left:11px;top:58.0px;width:5px;height:1px;background:#787878"></div>
<div class="a" style="left:13px;top:67.0px;width:3px;height:1px;background:#787878"></div>
<div class="a" style="left:0;top:77.0px;width:16px;height:1px;background:#787878"></div>
<div class="rl" style="left:3px;top:80.7px">2</div>
<div class="a" style="left:13px;top:86.0px;width:3px;height:1px;background:#787878"></div>
<div class="a" style="left:11px;top:95.0px;width:5px;height:1px;background:#787878"></div>
<div class="a" style="left:13px;top:104.0px;width:3px;height:1px;background:#787878"></div>
<div class="a" style="left:0;top:113.0px;width:16px;height:1px;background:#787878"></div>
<div class="rl" style="left:3px;top:116.7px">0</div>
<div class="a" style="left:13px;top:122.0px;width:3px;height:1px;background:#787878"></div>
<div class="a" style="left:11px;top:131.0px;width:5px;height:1px;background:#787878"></div>
<div class="a" style="left:13px;top:140.0px;width:3px;height:1px;background:#787878"></div>
<div class="a" style="left:0;top:149.0px;width:16px;height:1px;background:#787878"></div>
<div class="rl" style="left:3px;top:152.7px">2</div>
<div class="a" style="left:13px;top:159.0px;width:3px;height:1px;background:#787878"></div>
<div class="a" style="left:11px;top:168.0px;width:5px;height:1px;background:#787878"></div>
<div class="a" style="left:13px;top:177.0px;width:3px;height:1px;background:#787878"></div>
<div class="a" style="left:0;top:186.0px;width:16px;height:1px;background:#787878"></div>
<div class="rl" style="left:3px;top:189.7px">4</div>
<div class="a" style="left:13px;top:195.0px;width:3px;height:1px;background:#787878"></div>
<div class="a" style="left:11px;top:204.0px;width:5px;height:1px;background:#787878"></div>
<div class="a" style="left:13px;top:213.0px;width:3px;height:1px;background:#787878"></div>
<div class="a" style="left:0;top:222.0px;width:16px;height:1px;background:#787878"></div>
<div class="rl" style="left:3px;top:225.7px">6</div>
<div class="a" style="left:13px;top:231.0px;width:3px;height:1px;background:#787878"></div>
<div class="a" style="left:11px;top:241.0px;width:5px;height:1px;background:#787878"></div>
<div class="a" style="left:13px;top:250.0px;width:3px;height:1px;background:#787878"></div>
<div class="a" style="left:0;top:259.0px;width:16px;height:1px;background:#787878"></div>
<div class="rl" style="left:3px;top:262.7px">8</div>
<div class="a" style="left:13px;top:268.0px;width:3px;height:1px;background:#787878"></div>
<div class="a" style="left:11px;top:277.0px;width:5px;height:1px;background:#787878"></div>
<div class="a" style="left:13px;top:286.0px;width:3px;height:1px;background:#787878"></div>
<div class="a" style="left:0;top:295.0px;width:16px;height:1px;background:#787878"></div>
<div class="rl" style="left:3px;top:298.7px">1</div>
<div class="rl" style="left:3px;top:308.7px">0</div>
<div class="a" style="left:13px;top:304.0px;width:3px;height:1px;background:#787878"></div>
<div class="a" style="left:11px;top:313.0px;width:5px;height:1px;background:#787878"></div>
<div class="a" style="left:13px;top:322.0px;width:3px;height:1px;background:#787878"></div>
<div class="a" style="left:0;top:332.0px;width:16px;height:1px;background:#787878"></div>
<div class="rl" style="left:3px;top:335.7px">1</div>
<div class="rl" style="left:3px;top:345.7px">2</div>
<div class="a" style="left:13px;top:341.0px;width:3px;height:1px;background:#787878"></div>
<div class="a" style="left:11px;top:350.0px;width:5px;height:1px;background:#787878"></div>
<div class="a" style="left:13px;top:359.0px;width:3px;height:1px;background:#787878"></div>
<div class="a" style="left:0;top:368.0px;width:16px;height:1px;background:#787878"></div>
<div class="rl" style="left:3px;top:371.7px">1</div>
<div class="rl" style="left:3px;top:381.7px">4</div>
<div class="a" style="left:13px;top:377.0px;width:3px;height:1px;background:#787878"></div>
<div class="a" style="left:11px;top:386.0px;width:5px;height:1px;background:#787878"></div>
<div class="a" style="left:13px;top:395.0px;width:3px;height:1px;background:#787878"></div>
<div class="a" style="left:0;top:404.0px;width:16px;height:1px;background:#787878"></div>
<div class="rl" style="left:3px;top:407.7px">1</div>
<div class="rl" style="left:3px;top:417.7px">6</div>
<div class="a" style="left:13px;top:414.0px;width:3px;height:1px;background:#787878"></div>
<div class="a" style="left:11px;top:423.0px;width:5px;height:1px;background:#787878"></div>
<div class="a" style="left:13px;top:432.0px;width:3px;height:1px;background:#787878"></div>
<div class="a" style="left:0;top:441.0px;width:16px;height:1px;background:#787878"></div>
<div class="rl" style="left:3px;top:444.7px">1</div>
<div class="rl" style="left:3px;top:454.7px">8</div>
<div class="a" style="left:13px;top:450.0px;width:3px;height:1px;background:#787878"></div>
<div class="a" style="left:11px;top:459.0px;width:5px;height:1px;background:#787878"></div>
<div class="a" style="left:13px;top:468.0px;width:3px;height:1px;background:#787878"></div>
<div class="a" style="left:0;top:477.0px;width:16px;height:1px;background:#787878"></div>
<div class="rl" style="left:3px;top:480.7px">2</div>
<div class="rl" style="left:3px;top:490.7px">0</div>
<div class="a" style="left:13px;top:486.0px;width:3px;height:1px;background:#787878"></div>
<div class="a" style="left:11px;top:496.0px;width:5px;height:1px;background:#787878"></div>
<div class="a" style="left:13px;top:505.0px;width:3px;height:1px;background:#787878"></div>
<div class="a" style="left:0;top:514.0px;width:16px;height:1px;background:#787878"></div>
<div class="rl" style="left:3px;top:517.7px">2</div>
<div class="rl" style="left:3px;top:527.7px">2</div>
<div class="a" style="left:13px;top:523.0px;width:3px;height:1px;background:#787878"></div>
<div class="a" style="left:11px;top:532.0px;width:5px;height:1px;background:#787878"></div>
<div class="a" style="left:13px;top:541.0px;width:3px;height:1px;background:#787878"></div>
<div class="a" style="left:0;top:550.0px;width:16px;height:1px;background:#787878"></div>
<div class="rl" style="left:3px;top:553.7px">2</div>
<div class="rl" style="left:3px;top:563.7px">4</div>
<div class="a" style="left:13px;top:559.0px;width:3px;height:1px;background:#787878"></div>
<div class="a" style="left:11px;top:568.0px;width:5px;height:1px;background:#787878"></div>
<div class="a" style="left:13px;top:577.0px;width:3px;height:1px;background:#787878"></div>
<div class="a" style="left:0;top:587.0px;width:16px;height:1px;background:#787878"></div>
<div class="rl" style="left:3px;top:590.7px">2</div>
<div class="rl" style="left:3px;top:600.7px">6</div>
<div class="a" style="left:13px;top:596.0px;width:3px;height:1px;background:#787878"></div>
<div class="a" style="left:11px;top:605.0px;width:5px;height:1px;background:#787878"></div>
<div class="a" style="left:13px;top:614.0px;width:3px;height:1px;background:#787878"></div>
</div>
<div id="rcorner" class="a"></div>
<div class="a" style="left:42px;top:104px;width:15px;height:1px;background:repeating-linear-gradient(90deg,#7a7a7a 0,#7a7a7a 1px,transparent 1px,transparent 2px)"></div>
<div class="a" style="left:54px;top:93px;width:1px;height:15px;background:repeating-linear-gradient(0deg,#7a7a7a 0,#7a7a7a 1px,transparent 1px,transparent 2px)"></div>
<div id="vscroll" class="a"></div><div class="a" style="left:1062px;top:721px;width:16px;height:17px;background:#535353"></div>
<div id="statusbar" class="a">
<div class="a" style="left:0;top:0;width:47px;height:17px;background:#454545;border-right:1px solid #383838"></div>
<div class="a" style="left:47px;top:0;width:203px;height:17px;background:#535353"></div>
<div class="t" style="left:3px;top:0;color:#f0f0f0;font-size:12px;line-height:17px">64.17%</div>
<svg style="left:51px;top:2px" width="13" height="12" fill="none" stroke="#d0d0d0" stroke-width="1.300"><path d="M4.500 2.500H1v8.500h9V8"/><path d="M4 8c.5-3 2.500-4.500 5.500-4.500" stroke-width="1.600"/><path d="M8.500 0.500l4 3-4 3z" fill="#d0d0d0" stroke="none"/></svg>
<div class="t" style="left:104px;top:0;color:#d2d2d2;font-size:12px;line-height:17px">文档:1.37M/23.1M</div>
<svg style="left:240px;top:4px" width="5" height="9"><path d="M0.500 0.500l3.500 4-3.500 4" fill="none" stroke="#c8c8c8" stroke-width="1.100"/></svg>
</div>
<div id="doc" class="a"></div>
<svg style="left:0;top:0" width="1366" height="768"><path d="M568.7 330.2Q576.5 325.7 584.3 330.2L719.0 408.0Q726.8 412.5 719.0 417.0L584.3 494.8Q576.5 499.3 568.7 494.8L434.0 417.0Q426.2 412.5 434.0 408.0Z" fill="#dbd1bc"/><rect x="430.1" y="401.0" width="292.8" height="11.5" fill="#dbd1bc"/><path d="M568.7 318.7Q576.5 314.2 584.3 318.7L719.0 396.5Q726.8 401.0 719.0 405.5L584.3 483.3Q576.5 487.8 568.7 483.3L434.0 405.5Q426.2 401.0 434.0 396.5Z" fill="#e9e0c9"/></svg>
<div id="rsplit" class="a"></div><div id="rhdr" class="a"></div>
<svg style="left:1104px;top:66px" width="8" height="6" fill="#c8c8c8"><path d="M3 0L0 3l3 3zM7 0L4 3l3 3z"/></svg>
<svg style="left:1352px;top:66px" width="8" height="6" fill="#c8c8c8"><path d="M0 0l3 3-3 3zM4 0l3 3-3 3z"/></svg>
<div id="istrip" class="a">
<div class="ig" style="top:0px;height:41px"><div class="grip" style="left:9px;top:4px;width:20px"></div></div>
<div class="ig" style="top:41px;height:41px"><div class="grip" style="left:9px;top:4px;width:20px"></div></div>
<div class="ig" style="top:82px;height:40.5px"><div class="grip" style="left:9px;top:4px;width:20px"></div></div>
<div class="ig" style="top:122.5px;height:69.5px"><div class="grip" style="left:9px;top:4px;width:20px"></div></div>
<div class="ig" style="top:192px;height:41px"><div class="grip" style="left:9px;top:4px;width:20px"></div></div>
</div><div id="isgap" class="a"></div>
<svg style="left:1081px;top:75px" width="37" height="240" fill="none" stroke="#d6d6d6" stroke-width="1.2">
<rect x="13.600" y="15.600" width="4" height="4"/><rect x="13.600" y="21.600" width="4" height="4"/><rect x="13" y="27" width="5.200" height="5.200" fill="#d6d6d6" stroke="none"/>
<path d="M21.800 30.800C25.500 28 27.500 24 26.300 19.500" stroke-width="1.700"/><path d="M20.300 19.300l6.300-3.800.6 6.800z" fill="#d6d6d6" stroke="none"/>
<path d="M12.500 58.500l4.700-2.300 4.700 2.300v5.500l-4.700 2.500-4.700-2.500zM12.500 58.500l4.700 2.400 4.700-2.400M17.200 60.900v5.600" stroke-width="1"/>
<rect x="24" y="56" width="4.500" height="4" fill="#d6d6d6" stroke="none"/><rect x="24" y="62" width="4.500" height="4" fill="#d6d6d6" stroke="none"/><rect x="12.500" y="68.500" width="16" height="4" fill="#d6d6d6" stroke="none"/><path d="M24.500 69.700h3l-1.500 1.800z" fill="#444" stroke="none"/>
<path d="M10.500 96.500h8l2.500 4M10.500 96.500l2 11.500M18.500 96.500l1 5M12.500 108h2.500M10.500 96.500l13 18.500M23.500 103.500h6.500l2 11.500h-8.500zM25.500 105.500l4.500 7" stroke-width="1.200"/>
<path d="M24.800 104.500l-1.300 10.500" stroke-width="1.200"/>
</svg>
<div class="a" style="left:1093px;top:211px;font-size:18px;line-height:20px;color:#dcdcdc;white-space:nowrap">A</div>
<div class="a" style="left:1107px;top:213px;width:1px;height:17px;background:#dcdcdc"></div>
<svg style="left:1095px;top:242px" width="12" height="15" fill="#dcdcdc"><path d="M5 0h6.500v15H10V1.500H8V15H6.500V8.500H5A4.250 4.250 0 0 1 5 0z"/></svg>
<div class="a" style="left:1092px;top:282px;width:18px;height:17px;border-radius:3px;background:linear-gradient(135deg,#e4e4e4,#b8b8b8)"></div>
<svg style="left:1092px;top:280px" width="22" height="20" fill="none" stroke="#333" stroke-width="1.100"><path d="M3 5l4 4M7 5L3 9M8.500 4.500l2 2" stroke="#777" stroke-width="0.800"/><path d="M3.500 18l6-4.500 3.500.5 4.500-4.500 3.500-3-1-1.500-5 2-4 3.500-1 3z" fill="#d0d0d0"/></svg>

<div id="rpanels" class="a">
<div class="ptabs" style="top:0"><div class="ptab" style="left:0;width:43px">颜色</div><div class="ptab on" style="left:43px;width:42px">色板</div></div>
<div class="a" style="left:228px;top:10px;width:10px;height:7px;background:repeating-linear-gradient(0deg,#c8c8c8 0,#c8c8c8 1px,transparent 1px,transparent 2px)"></div>
<div class="a" style="left:4px;top:36px;width:227px;height:19px;background:#424242;border:1px solid #3c3c3c">
<div class="rsw" style="left:1px;background:#e9e0c9"></div>
<div class="rsw" style="left:17px;background:#cdbaa9"></div>
<div class="rsw" style="left:33px;background:#fcd893"></div>
<div class="rsw" style="left:49px;background:#ef7f56"></div>
<div class="rsw" style="left:65px;background:#ec855b"></div>
<div class="rsw" style="left:81px;background:#fd8a80"></div>
<div class="rsw" style="left:97px;background:#f44336"></div>
<div class="rsw" style="left:113px;background:#a8d69b"></div>
<div class="rsw" style="left:129px;background:#9182c0"></div>
<div class="rsw" style="left:145px;background:#b3d465"></div>
<div class="rsw" style="left:161px;background:#808080"></div>
<div class="rsw" style="left:177px;background:#0000ff"></div>
<div class="rsw" style="left:193px;background:#000000"></div>
<div class="rsw" style="left:209px;background:#ede1cc"></div>
</div>
<div class="a" style="left:0;top:59px;width:216px;height:115px;background:#404040;overflow:hidden">
<div class="sw" style="left:0px;top:0;height:6px;background:#ffe082"></div>
<div class="sw" style="left:18px;top:0;height:6px;background:#ffd54f"></div>
<div class="sw" style="left:36px;top:0;height:6px;background:#ffca28"></div>
<div class="sw" style="left:54px;top:0;height:6px;background:#ffb300"></div>
<div class="sw" style="left:72px;top:0;height:6px;background:#ffa000"></div>
<div class="sw" style="left:90px;top:0;height:6px;background:#ff8f00"></div>
<div class="sw" style="left:108px;top:0;height:6px;background:#ff6f00"></div>
<div class="sw" style="left:126px;top:0;height:6px;background:#ffe57f"></div>
<div class="sw" style="left:144px;top:0;height:6px;background:#ffd740"></div>
<div class="sw" style="left:162px;top:0;height:6px;background:#ffc400"></div>
<div class="sw" style="left:180px;top:0;height:6px;background:#ffab00"></div>
<div class="sw" style="left:198px;top:0;height:6px;background:#ff9800"></div>
<div class="sw" style="left:0px;top:7px;background:#fff3e0"></div>
<div class="sw" style="left:18px;top:7px;background:#ffe0b2"></div>
<div class="sw" style="left:36px;top:7px;background:#ffcc80"></div>
<div class="sw" style="left:54px;top:7px;background:#ffb74d"></div>
<div class="sw" style="left:72px;top:7px;background:#ffa726"></div>
<div class="sw" style="left:90px;top:7px;background:#fb8c00"></div>
<div class="sw" style="left:108px;top:7px;background:#f57c00"></div>
<div class="sw" style="left:126px;top:7px;background:#ef6c00"></div>
<div class="sw" style="left:144px;top:7px;background:#e65100"></div>
<div class="sw" style="left:162px;top:7px;background:#ffd180"></div>
<div class="sw" style="left:180px;top:7px;background:#ffab40"></div>
<div class="sw" style="left:198px;top:7px;background:#ff9100"></div>
<div class="sw" style="left:0px;top:25px;background:#ff6d00"></div>
<div class="sw" style="left:18px;top:25px;background:#ff5722"></div>
<div class="sw" style="left:36px;top:25px;background:#fbe9e7"></div>
<div class="sw" style="left:54px;top:25px;background:#ffccbc"></div>
<div class="sw" style="left:72px;top:25px;background:#ffab91"></div>
<div class="sw" style="left:90px;top:25px;background:#ff8a65"></div>
<div class="sw" style="left:108px;top:25px;background:#ff7043"></div>
<div class="sw" style="left:126px;top:25px;background:#f4511e"></div>
<div class="sw" style="left:144px;top:25px;background:#e64a19"></div>
<div class="sw" style="left:162px;top:25px;background:#d84315"></div>
<div class="sw" style="left:180px;top:25px;background:#bf360c"></div>
<div class="sw" style="left:198px;top:25px;background:#ff9e80"></div>
<div class="sw" style="left:0px;top:43px;background:#ff6e40"></div>
<div class="sw" style="left:18px;top:43px;background:#ff3d00"></div>
<div class="sw" style="left:36px;top:43px;background:#dd2c00"></div>
<div class="sw" style="left:54px;top:43px;background:#9e9e9e"></div>
<div class="sw" style="left:72px;top:43px;background:#fafafa"></div>
<div class="sw" style="left:90px;top:43px;background:#f5f5f5"></div>
<div class="sw" style="left:108px;top:43px;background:#eeeeee"></div>
<div class="sw" style="left:126px;top:43px;background:#e0e0e0"></div>
<div class="sw" style="left:144px;top:43px;background:#bdbdbd"></div>
<div class="sw" style="left:162px;top:43px;background:#757575"></div>
<div class="sw" style="left:180px;top:43px;background:#616161"></div>
<div class="sw" style="left:198px;top:43px;background:#424242"></div>
<div class="sw" style="left:0px;top:61px;background:#212121"></div>
<div class="sw" style="left:18px;top:61px;background:#607d8b"></div>
<div class="sw" style="left:36px;top:61px;background:#eceff1"></div>
<div class="sw" style="left:54px;top:61px;background:#cfd8dc"></div>
<div class="sw" style="left:72px;top:61px;background:#b0bec5"></div>
<div class="sw" style="left:90px;top:61px;background:#90a4ae"></div>
<div class="sw" style="left:108px;top:61px;background:#78909c"></div>
<div class="sw" style="left:126px;top:61px;background:#546e7a"></div>
<div class="sw" style="left:144px;top:61px;background:#455a64"></div>
<div class="sw" style="left:162px;top:61px;background:#37474f"></div>
<div class="sw" style="left:180px;top:61px;background:#263238"></div>
<div class="sw" style="left:198px;top:61px;background:#795548"></div>
<div class="sw" style="left:0px;top:79px;background:#efebe9"></div>
<div class="sw" style="left:18px;top:79px;background:#d7ccc8"></div>
<div class="sw" style="left:36px;top:79px;background:#bcaaa4"></div>
<div class="sw" style="left:54px;top:79px;background:#a1887f"></div>
<div class="sw" style="left:72px;top:79px;background:#8d6e63"></div>
<div class="sw" style="left:90px;top:79px;background:#6d4c41"></div>
<div class="sw" style="left:108px;top:79px;background:#5d4037"></div>
<div class="sw" style="left:126px;top:79px;background:#4e342e"></div>
<div class="sw" style="left:144px;top:79px;background:#3e2723"></div>
<div class="sw" style="left:162px;top:79px;background:#000000"></div>
<div class="sw" style="left:180px;top:79px;background:#ffffff"></div>
<div class="sw" style="left:198px;top:79px;background:#20b33f"></div>
<div class="sw" style="left:0px;top:97px;background:#22e05a"></div>
<div class="sw" style="left:18px;top:97px;background:#f771a7"></div>
<div class="sw" style="left:36px;top:97px;background:#e3528e"></div>
<div class="sw" style="left:54px;top:97px;background:#e9e0c9"></div>
<div class="sw" style="left:72px;top:97px;background:#ef7f56"></div>
<div class="sw" style="left:90px;top:97px;background:#fcd893"></div>
<div class="sw" style="left:108px;top:97px;background:#cdbaa9"></div>
<div class="a" style="left:126px;top:97px;width:90px;height:18px;background:#535353"></div>
</div>
<div class="a" style="left:216px;top:59px;width:12px;height:115px;background:#4a4a4a"></div>
<div class="a" style="left:228px;top:59px;width:14px;height:115px;background:#515151"></div>
<svg style="left:232.500px;top:67px" width="8" height="5"><path d="M0 4.500l4-4.500 4 4.500" fill="none" stroke="#a0a0a0" stroke-width="1.100"/></svg>
<svg style="left:232.500px;top:160px" width="8" height="5"><path d="M0 0l4 4.500L8 0" fill="none" stroke="#a0a0a0" stroke-width="1.100"/></svg>
<div class="a" style="left:229px;top:142px;width:12px;height:15px;background:#6e6e6e"></div>
<svg style="left:175px;top:180px" width="12" height="12" fill="none" stroke="#c8c8c8" stroke-width="1.300"><path d="M1 1h9.500v6.500L7 11H1z" fill="none"/><path d="M10.500 7.500H7V11"/></svg>
<svg style="left:203px;top:179px" width="12" height="14" fill="none" stroke="#808080" stroke-width="1.100"><path d="M0.500 3h11M4 3V1h4v2M1.700 3.200l.8 10h7l.8-10M4.300 5.500v6M6 5.500v6M7.700 5.500v6"/></svg>

<div class="a" style="left:0;top:198px;width:245px;height:3px;background:#383838"></div>
<div class="ptabs" style="top:201px"><div class="ptab" style="left:0;width:44px">通道</div><div class="ptab" style="left:44px;width:44px">路径</div><div class="ptab on" style="left:88px;width:44px">图层</div></div>
<div class="a" style="left:228px;top:211px;width:10px;height:7px;background:repeating-linear-gradient(0deg,#c8c8c8 0,#c8c8c8 1px,transparent 1px,transparent 2px)"></div>
<div class="a" style="left:0px;top:229px;width:243px;height:434px;background:#535353"></div>
<div class="a" style="left:0px;top:316px;width:243px;height:321px;background:#4d4d4d"></div>
<div class="a" style="left:243px;top:201px;width:2px;height:462px;background:#424242"></div>
<div class="a" style="left:4px;top:236px;width:87px;height:21px;background:#454545;border:1px solid #636363;border-radius:2px"></div>
<svg style="left:10px;top:241px" width="10" height="11" fill="none" stroke="#d6d6d6" stroke-width="1.2" ><circle cx="6" cy="4" r="3.200" stroke-width="1.400"/><path d="M3.800 6.300L0.800 9.800" stroke-width="1.800"/></svg>
<div class="t" style="left:26px;top:238px;color:#f0f0f0;">类型</div>
<svg style="left:80px;top:244px" width="7" height="4" fill="none" stroke="#d6d6d6" stroke-width="1.2" ><path d="M0 0l3.500 4L7 0" stroke="#c8c8c8" stroke-width="1.100"/></svg>
<svg style="left:106px;top:241px" width="13" height="10" fill="none" stroke="#d6d6d6" stroke-width="1.2" ><rect x="0.600" y="0.600" width="11.800" height="8.800"/><path d="M2.500 7.500l2.500-3.500 2 2.500 1.500-1.500 2 2.500z" fill="#d6d6d6" stroke="none"/></svg>
<svg style="left:131px;top:241px" width="11" height="11" fill="none" stroke="#d6d6d6" stroke-width="1.2" ><circle cx="5.500" cy="5.500" r="4.800"/><path d="M5.500 0.700a4.800 4.800 0 0 0 0 9.600z" fill="#d6d6d6" stroke="none" transform="rotate(45 5.500 5.500)"/></svg>
<div class="a" style="left:156px;top:238px;font-family:'Liberation Serif',serif;font-weight:bold;font-size:15px;line-height:17px;color:#d6d6d6">T</div>
<svg style="left:179px;top:241px" width="12" height="11" fill="none" stroke="#d6d6d6" stroke-width="1.2" ><rect x="2" y="2" width="8" height="7" stroke-width="1.200"/><g fill="#d6d6d6" stroke="none"><rect x="0" y="0" width="3" height="3"/><rect x="9" y="0" width="3" height="3"/><rect x="0" y="8" width="3" height="3"/><rect x="9" y="8" width="3" height="3"/></g></svg>
<svg style="left:203px;top:240px" width="12" height="12" fill="none" stroke="#d6d6d6" stroke-width="1.2" ><path d="M3.500 2.500V0.600h5l3 3v8h-5" /><rect x="0.600" y="5" width="6" height="6.500" fill="#d6d6d6" stroke="none"/></svg>
<div class="a" style="left:231px;top:238px;width:10px;height:19px;border:1px solid #6a6a6a;border-radius:5px;background:#454545"></div>
<div class="a" style="left:232px;top:238px;width:8px;height:8px;border-radius:4px;background:#e6e6e6"></div>
<div class="a" style="left:0px;top:260px;width:243px;height:1px;background:#484848"></div>
<div class="a" style="left:4px;top:263px;width:118px;height:21px;background:#454545;border:1px solid #636363;border-radius:2px"></div>
<div class="t" style="left:12px;top:265.5px;color:#f0f0f0;">穿透</div>
<svg style="left:111px;top:271.5px" width="7" height="4" fill="none" stroke="#d6d6d6" stroke-width="1.2" ><path d="M0 0l3.500 4L7 0" stroke="#c8c8c8" stroke-width="1.100"/></svg>
<div class="t" style="left:130px;top:265.5px;color:#f0f0f0;color:#d0d0d0;letter-spacing:-0.900px">不透明度:</div>
<div class="t" style="left:188.5px;top:265.5px;color:#f0f0f0;letter-spacing:-0.500px">100%</div>
<div class="a" style="left:184px;top:282px;width:57px;height:1px;background:#6e6e6e"></div>
<svg style="left:231px;top:271.5px" width="7" height="4" fill="none" stroke="#d6d6d6" stroke-width="1.2" ><path d="M0 0l3.500 4L7 0" stroke="#c8c8c8" stroke-width="1.100"/></svg>
<div class="a" style="left:0px;top:287px;width:243px;height:1px;background:#484848"></div>
<div class="t" style="left:6px;top:293px;color:#f0f0f0;color:#d0d0d0">锁定:</div>
<svg style="left:44px;top:295px" width="11" height="11"><rect width="11" height="11" fill="#8c8c8c"/><g fill="#5e5e5e"><rect x="1" y="1" width="3" height="3"/><rect x="7" y="1" width="3" height="3"/><rect x="4" y="4" width="3" height="3"/><rect x="1" y="7" width="3" height="3"/><rect x="7" y="7" width="3" height="3"/></g></svg>
<svg style="left:65px;top:294px" width="13" height="14" fill="#8c8c8c"><path d="M12.300 0.400c.7.500.6 1.300.2 1.900L7.500 8.800 5.600 7.300l5-6.400c.500-.600 1.200-.900 1.700-.500z"/><path d="M5 7.800l2 1.600c-.2 2.600-2.400 4.500-6 4.100 1.700-1 1.700-2.200 2-3.700.3-.900 1.100-1.700 2-2z"/></svg>
<svg style="left:87px;top:294.5px" width="13" height="13" viewBox="0 0 16 16"><path d="M8 0l3 3.2H9v3.8h3.8V5L16 8l-3.200 3V9H9v3.800h2L8 16l-3-3.200h2V9H3.200v2L0 8l3.200-3v2H7V3.200H5z" fill="none" stroke="#9a9a9a" stroke-width="1.100"/></svg>
<svg style="left:109px;top:294px" width="14" height="14" fill="none" stroke="#d6d6d6" stroke-width="1.2" ><path d="M3.500 0v10.500H14M0 3.500h7.500l3 3V14" stroke-width="1.300"/><path d="M7.500 3.500v3h3" stroke-width="1"/></svg>
<svg style="left:133px;top:294px" width="10" height="13" fill="none" stroke="#d6d6d6" stroke-width="1.2" ><path d="M2.500 5.500V3.500a2.500 2.500 0 0 1 5 0v2" stroke-width="1.500"/><rect x="0" y="5.500" width="10" height="7.500" rx="1" fill="#d6d6d6" stroke="none"/></svg>
<div class="t" style="left:153px;top:293px;color:#f0f0f0;color:#d0d0d0">填充:</div>
<div class="t" style="left:188.5px;top:293px;color:#f0f0f0;letter-spacing:-0.500px">100%</div>
<div class="a" style="left:184px;top:310px;width:57px;height:1px;background:#6e6e6e"></div>
<svg style="left:231px;top:299px" width="7" height="4" fill="none" stroke="#d6d6d6" stroke-width="1.2" ><path d="M0 0l3.500 4L7 0" stroke="#c8c8c8" stroke-width="1.100"/></svg>
<div class="a" style="left:0px;top:315px;width:243px;height:1px;background:#424242"></div>
<div class="a" style="left:0px;top:316px;width:229px;height:31px;background:#535353"></div>
<div class="a" style="left:0px;top:347px;width:229px;height:1px;background:#454545"></div>
<svg style="left:8px;top:327.5px" width="15" height="9" fill="none" stroke="#d6d6d6" stroke-width="1.2" ><path d="M0.500 4.500C3 0 12 0 14.500 4.500 12 9 3 9 0.500 4.500z" fill="#dcdcdc" stroke="none"/><circle cx="7.500" cy="4.300" r="2.600" fill="#535353" stroke="none"/><circle cx="7.500" cy="4.300" r="1.300" fill="#dcdcdc" stroke="none"/></svg>
<div class="a" style="left:34px;top:319px;width:32px;height:25px;border:1px solid #1e1e1e;background-color:#fff;background-image:linear-gradient(45deg,#ccc 25%,transparent 25%,transparent 75%,#ccc 75%),linear-gradient(45deg,#ccc 25%,transparent 25%,transparent 75%,#ccc 75%);background-size:8px 8px;background-position:0 0,4px 4px"></div>
<svg style="left:34px;top:319px" width="32" height="25"><path d="M9 11.500l7-4 11 4.500-7 5z" fill="#e9e0c9"/><rect x="19" y="12" width="13" height="13" fill="#535353" stroke="#1e1e1e" stroke-width="1"/><path d="M22.500 21.500v-6h5l2 2v1" fill="none" stroke="#d8d8d8" stroke-width="1.200"/><rect x="22" y="19" width="4.500" height="4.500" fill="#d8d8d8"/></svg>
<div class="t" style="left:75px;top:324px;color:#f0f0f0;font-size:12.5px">圆角矩形 1</div>
<div class="a" style="left:0px;top:348px;width:30px;height:24px;background:#535353"></div>
<div class="a" style="left:31px;top:348px;width:187px;height:24px;background:#6b6b6b"></div>
<div class="a" style="left:218px;top:348px;width:11px;height:24px;background:#5c5c5c"></div>
<div class="a" style="left:0px;top:371px;width:229px;height:1px;background:#454545"></div>
<svg style="left:8px;top:355.5px" width="15" height="9" fill="none" stroke="#d6d6d6" stroke-width="1.2" ><path d="M0.500 4.500C3 0 12 0 14.500 4.500 12 9 3 9 0.500 4.500z" fill="#dcdcdc" stroke="none"/><circle cx="7.500" cy="4.300" r="2.600" fill="#535353" stroke="none"/><circle cx="7.500" cy="4.300" r="1.300" fill="#dcdcdc" stroke="none"/></svg>
<svg style="left:36px;top:355px" width="5" height="10" fill="none" stroke="#d6d6d6" stroke-width="1.2" ><path d="M0.500 0.500l3.500 4.500-3.500 4.500" stroke-width="1.100" stroke="#d0d0d0"/></svg>
<svg style="left:45px;top:353px" width="16" height="12" fill="#dcdcdc"><path d="M0 1.200C0 .5.500 0 1.200 0h4l1.300 1.800H0z"/><rect x="0" y="2.600" width="15.500" height="9.400" rx="1"/></svg>
<div class="t" style="left:72px;top:352px;color:#f0f0f0;font-size:12.5px">组 1</div>
<div class="a" style="left:201px;top:350px;font-style:italic;font-size:14px;line-height:18px;color:#e0e0e0;letter-spacing:-0.500px;font-weight:bold;transform:scaleX(.9);transform-origin:0 0">fx</div>
<svg style="left:220px;top:357px" width="8" height="5" fill="none" stroke="#d6d6d6" stroke-width="1.2" ><path d="M0.500 4.500l3.500-4 3.500 4" stroke="#dcdcdc" stroke-width="1.100"/></svg>
<div class="a" style="left:0px;top:372px;width:229px;height:36px;background:#535353"></div>
<div class="a" style="left:0px;top:408px;width:229px;height:1px;background:#454545"></div>
<svg style="left:59px;top:376.0px" width="15" height="9" fill="none" stroke="#d6d6d6" stroke-width="1.2" ><path d="M0.500 4.500C3 0 12 0 14.500 4.500 12 9 3 9 0.500 4.500z" fill="#dcdcdc" stroke="none"/><circle cx="7.500" cy="4.300" r="2.600" fill="#535353" stroke="none"/><circle cx="7.500" cy="4.300" r="1.300" fill="#dcdcdc" stroke="none"/></svg>
<div class="t" style="left:77px;top:372.5px;color:#f0f0f0;">效果</div>
<svg style="left:76px;top:395.0px" width="15" height="9" fill="none" stroke="#d6d6d6" stroke-width="1.2" ><path d="M0.500 4.500C3 0 12 0 14.500 4.500 12 9 3 9 0.500 4.500z" fill="#dcdcdc" stroke="none"/><circle cx="7.500" cy="4.300" r="2.600" fill="#535353" stroke="none"/><circle cx="7.500" cy="4.300" r="1.300" fill="#dcdcdc" stroke="none"/></svg>
<div class="t" style="left:94px;top:391.5px;color:#f0f0f0;">颜色叠加</div>
<div class="a" style="left:0px;top:409px;width:229px;height:31px;background:#535353"></div>
<div class="a" style="left:0px;top:440px;width:229px;height:1px;background:#454545"></div>
<svg style="left:8px;top:420.0px" width="15" height="9" fill="none" stroke="#d6d6d6" stroke-width="1.2" ><path d="M0.500 4.500C3 0 12 0 14.500 4.500 12 9 3 9 0.500 4.500z" fill="#dcdcdc" stroke="none"/><circle cx="7.500" cy="4.300" r="2.600" fill="#535353" stroke="none"/><circle cx="7.500" cy="4.300" r="1.300" fill="#dcdcdc" stroke="none"/></svg>
<div class="a" style="left:34px;top:412px;width:32px;height:25px;background:#cdbaa9;border:1px solid #1e1e1e"></div>
<div class="t" style="left:78px;top:416.5px;color:#f0f0f0;font-style:italic;transform:skewX(-12deg)">背景</div>
<svg style="left:202px;top:419px" width="10" height="12" fill="none" stroke="#d6d6d6" stroke-width="1.2" ><path d="M2.500 5V3.300a2.500 2.500 0 0 1 5 0V5" stroke-width="1.300"/><rect x="0.600" y="5" width="8.800" height="6.400" stroke-width="1.200"/><rect x="4.200" y="7.300" width="1.600" height="1.600" fill="#d6d6d6" stroke="none"/></svg>
<div class="a" style="left:30px;top:316px;width:1px;height:125px;background:#454545"></div>
<div class="a" style="left:0px;top:637px;width:243px;height:26px;background:#535353;border-top:1px solid #454545"></div>
</div>
<div id="taskbar" class="a"></div>
<svg style="left:10px;top:745px" width="16" height="16" fill="#fff"><path d="M0 2.300L6.500 1.400v6.100H0zM7.300 1.300L16 0v7.500H7.300zM0 8.300h6.500v6.200L0 13.600zM7.300 8.300H16V16l-8.700-1.200z"/></svg>
<svg style="left:47px;top:745px" width="17" height="17" viewBox="0 0 17 17"><path d="M0.800 8.500C1.200 3.500 4.500 0.500 8.800 0.500c4.500 0 7.400 3 7.400 7.500v2H5.700c.2 2.300 2 3.400 4.500 3.400 1.800 0 3.500-.5 5-1.400v3.400c-1.600.800-3.600 1.300-5.700 1.300-4.500 0-7.600-2.600-7.600-7 0-2.600 1.600-4.800 4-6-1.800.600-3.800 2.400-5.100 4.800zM5.800 7h6.400c0-2-1.200-3.200-3.100-3.200C7.300 3.800 6 5.100 5.800 7z" fill="#1f8fe8"/></svg>
<svg style="left:84px;top:746px" width="18" height="14"><path d="M0 1.500C0 .7.600 0 1.400 0h4.800l1.500 1.800H17c.6 0 1 .5 1 1V14H0z" fill="#e9b84a"/><rect x="0" y="3.200" width="18" height="10.800" fill="#fbd977"/><path d="M3 8.500h12V14H3z" fill="#3a96dd"/><path d="M6 11h6v3H6z" fill="#fbd977"/></svg>
<svg style="left:122px;top:744px" width="17" height="17" viewBox="0 0 17 17"><circle cx="8.500" cy="8.700" r="7.300" fill="#48c22a"/><path d="M1 12.500C4 16 13 15.500 16 5" fill="none" stroke="#9be070" stroke-width="1"/><path d="M4.800 9.600h7.500c.2-3-1.500-4.600-3.700-4.600-2.400 0-4 1.700-4 4 0 2.500 1.700 4 4.100 4 1.300 0 2.300-.3 3.200-.9" fill="none" stroke="#fff" stroke-width="1.900"/></svg>
<div class="a" style="left:149px;top:738px;width:160px;height:30px;background:#343c42"></div>
<div class="a" style="left:149px;top:765px;width:160px;height:3px;background:#7cc0f2"></div>
<div class="a" style="left:157px;top:745px;width:16px;height:15px;background:#0b1b38;border:1px solid #39a5f5"></div>
<div class="a" style="left:159px;top:746px;font-size:10.500px;line-height:13px;font-weight:bold;color:#8ed0ff;letter-spacing:-0.400px">Ps</div>
<div class="t" style="left:177px;top:744px;font-size:12.300px;line-height:18px;color:#ededed">未标题-2 @ 64.2% (...</div>
<svg style="left:662px;top:742px" width="40" height="22"><path d="M10 0l9.500 5.300v10.600L10 21.200.5 15.900V5.300z" fill="#64686a"/><path d="M4.500 6.500v5.500c0 3 6 3 6 0V6.500M14 6.500v8.500" fill="none" stroke="#0e1316" stroke-width="2.200"/></svg>
<div class="t" style="left:684px;top:745px;font-size:12px;line-height:14px;color:#64686a;font-weight:bold;letter-spacing:0.300px">·cn</div>
<!-- tray -->
<svg style="left:1108px;top:743px" width="18" height="18"><circle cx="9" cy="9" r="8.300" fill="#cfdc1a"/><circle cx="9" cy="9" r="8.300" fill="none" stroke="#8aa80e" stroke-width="1"/><circle cx="9" cy="9" r="5.500" fill="#1f7a1f"/><path d="M9 5.500v7M5.500 9h7" stroke="#ffe600" stroke-width="2.200"/></svg>
<svg style="left:1136px;top:744px" width="14" height="17" fill="none" stroke="#f0f0f0" stroke-width="1.200"><path d="M3 4V0.600h5.500V4M1.500 4h8.500v10.500c0 .8-.5 1.500-1.300 1.500H2.800c-.8 0-1.300-.7-1.300-1.500z"/><path d="M4.500 2.300h.1M7 2.300h.1" stroke-width="1"/><path d="M8.500 13.500l2 2 3-4" stroke-width="1"/></svg>
<svg style="left:1157px;top:746px" width="17" height="13" fill="none" stroke="#f0f0f0" stroke-width="1.200"><rect x="4.600" y="3.600" width="10.800" height="6.800"/><path d="M15.500 5.500h1.500v3h-1.500" /><path d="M0 5h2M0 8h2M2 3.500v6h1.500l1.500-1v-4l-1.500-1z" fill="#f0f0f0" stroke-width="0.800"/></svg>
<svg style="left:1181px;top:745px" width="17" height="16"><path d="M0.600 5h2.800L7 1.200v12.600L3.400 10H0.600z" fill="none" stroke="#f0f0f0" stroke-width="1.100"/><circle cx="11.800" cy="11" r="4.200" fill="#e0222a"/><path d="M10 9.200l3.600 3.600M13.600 9.200L10 12.800" stroke="#fff" stroke-width="1.200"/></svg>
<svg style="left:1207px;top:746px" width="15" height="14" fill="none" stroke="#f0f0f0" stroke-width="1.400"><path d="M1 14A12.500 12.500 0 0 1 13.500 1.500"/><path d="M4.800 14A8.700 8.700 0 0 1 13.500 5.300"/><path d="M8.500 14A5 5 0 0 1 13.500 9"/><rect x="11" y="11.500" width="3" height="2.500" fill="#f0f0f0" stroke="none"/></svg>
<svg style="left:1229px;top:745px" width="18" height="17"><path d="M0.500 0.500h15.500v11.500H0.500z" fill="#f0f0f0"/><path d="M2.500 3.200h11M2.500 5.800h11M2.500 8.400h6" stroke="#10151a" stroke-width="1.100"/><circle cx="13" cy="11.500" r="3.900" fill="#10151a" stroke="#f0f0f0" stroke-width="1.200"/><path d="M11 11.500h4" stroke="#f0f0f0" stroke-width="1.200"/></svg>
<div class="t" style="left:1253px;top:743px;font-size:14px;line-height:18px;color:#fff;font-weight:bold">中</div>
<svg style="left:1280px;top:743px" width="18" height="19"><rect x="2" y="2" width="14" height="15" rx="2.500" fill="#f2571e" transform="rotate(-10 9 9.500)"/></svg>
<div class="a" style="left:1283px;top:743px;font-size:15px;line-height:18px;font-weight:bold;color:#fff;transform:rotate(-8deg) scaleX(1.150);transform-origin:50% 50%">S</div>
<div class="t" style="left:1318px;top:743px;font-size:12.500px;line-height:16px;color:#fff">13:36</div>
<div class="a" style="left:1362px;top:741px;width:1px;height:27px;background:#5a5f63"></div>
<!-- sogou bar -->
<div class="a" style="left:1174px;top:714px;width:174px;height:24px;background:#fdfdff;border:1px solid #dfe6f2"></div>
<svg style="left:1162px;top:710px" width="30" height="29"><rect x="3" y="3" width="24" height="23" rx="4" fill="#f2561d" transform="rotate(-15 15 14.500)"/></svg>
<div class="a" style="left:1168px;top:708px;font-size:27px;line-height:32px;font-weight:bold;color:#fff;transform:rotate(-14deg) scaleX(1.300);transform-origin:50% 50%">S</div>
<div class="t" style="left:1197px;top:716px;font-size:15px;line-height:20px;color:#1f6fd0;font-weight:bold">中</div>
<svg style="left:1219px;top:719px" width="15" height="14"><path d="M9.500 0c1.800 3.500 1 8-3 10.500-2 1.200-4.300 1.300-6.300.800 2.500 2.800 7 3.500 10.300 1.300C14.500 10 15 4 9.500 0z" fill="#1f6fd0"/></svg>
<svg style="left:1242px;top:721px" width="12" height="13"><circle cx="2.300" cy="2.300" r="1.600" fill="none" stroke="#1f6fd0" stroke-width="1.300"/><path d="M7.500 6.500h3c.3 2.500-.5 4.500-2.500 6l-1-.7c1-1 1.500-2 1.500-3.300h-1z" fill="#1f6fd0"/></svg>
<svg style="left:1262px;top:720px" width="16" height="12"><rect x="0.700" y="0.700" width="14.600" height="10.600" rx="1.500" fill="none" stroke="#1f6fd0" stroke-width="1.600"/><path d="M2.800 3.600h10.400M2.800 6h10.400" stroke="#1f6fd0" stroke-width="1.700" stroke-dasharray="1.700 0.900"/><path d="M4.500 8.500h7" stroke="#1f6fd0" stroke-width="1.600"/></svg>
<svg style="left:1286px;top:718px" width="18" height="17"><circle cx="6.500" cy="3.500" r="3.300" fill="#1f6fd0"/><path d="M0 14c0-4 2.500-6.500 6.500-6.500 2 0 3.500.7 4.500 2H6v5.500H.500z" fill="#1f6fd0"/><rect x="6" y="9.500" width="11.500" height="7" rx="1.500" fill="#1f6fd0"/></svg>
<div class="a" style="left:1293px;top:727px;font-size:8px;line-height:8px;font-weight:bold;color:#fff;letter-spacing:-0.300px">36</div>
<svg style="left:1307px;top:719px" width="15" height="14"><path d="M4.500 0C5.500 1.500 9.500 1.500 10.500 0L15 2.500 13.500 6l-2-.8V14h-8V5.200l-2 .8L0 2.500z" fill="#1f6fd0"/></svg>
<svg style="left:1328px;top:719px" width="15" height="15"><path d="M14.500 3.500a4.300 4.300 0 0 1-6 4l-6 6.500a1.500 1.500 0 0 1-2-2l6.500-6a4.300 4.300 0 0 1 5-5.500L9.500 3l.500 2 2 .500z" fill="#1f6fd0"/></svg>
<!-- network widget -->
<div class="a" style="left:1232px;top:670px;width:111px;height:38px;border-radius:19px;background:linear-gradient(#fbfbfb,#d6d6d6);box-shadow:0 1px 4px rgba(0,0,0,.5)"></div>
<div class="a" style="left:1217px;top:664px;width:47px;height:48px;border-radius:24px;background:#fff;box-shadow:0 1px 5px rgba(0,0,0,.55)"></div>
<div class="a" style="left:1219.500px;top:666.500px;width:42px;height:43px;border-radius:21.500px;background:linear-gradient(#b8561a 0,#d27a3c 26%,#fb8d2e 27%,#f98a2a 100%);overflow:hidden;border:1px solid #d9691c"><div class="a" style="left:12px;top:2px;width:16px;height:5px;border-radius:50%;background:radial-gradient(rgba(255,255,255,.9),rgba(255,255,255,0))"></div></div>
<div class="t" style="left:1226px;top:678px;font-size:13.500px;line-height:18px;color:#fff;letter-spacing:0.400px">70%</div>
<svg style="left:1268px;top:678px" width="8" height="22"><path d="M4 0l3.500 3.500H5V7H3V3.500H.500z" fill="#d9534f"/><path d="M4 21l3.500-3.500H5V14H3v3.500H.500z" fill="#2e9e4a"/></svg>
<div class="t" style="left:1296px;top:674px;font-size:10px;line-height:15px;color:#111;letter-spacing:-0.450px">0K/s</div>
<div class="t" style="left:1296px;top:689px;font-size:10px;line-height:15px;color:#111;letter-spacing:-0.450px">0K/s</div>
<div class="a" style="left:1318px;top:679.500px;width:20px;height:20px;border-radius:10px;background:#c9c9c9"></div>
<div class="a" style="left:1320px;top:681px;width:16px;height:16px;border-radius:8px;background:#3b86e0"></div>
<svg style="left:1323px;top:684px" width="10" height="10"><path d="M5 0.500v9M0.500 5h9" stroke="#fff" stroke-width="1.800"/></svg>
<div class="a" style="left:1330px;top:679px;width:8px;height:8px;border-radius:4px;background:#d9363a"></div>

</body>
</html>
